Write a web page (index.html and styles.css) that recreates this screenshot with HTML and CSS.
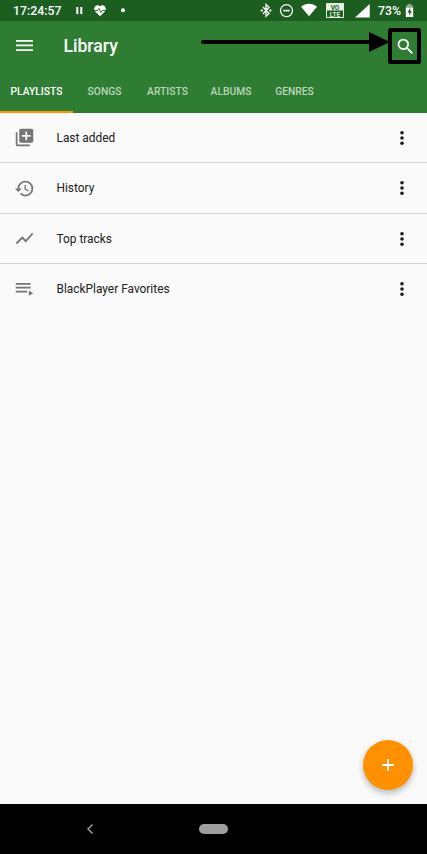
FILE: index.html
```html
<!DOCTYPE html>
<html lang="en">
<head>
<meta charset="utf-8">
<meta name="viewport" content="width=device-width">
<title>Library</title>
<link rel="stylesheet" href="styles.css">
</head>
<body>
<div class="screen">
  <header class="status">
    <span class="clock">17:24:57</span>
    <svg class="status-left" width="54" height="21" viewBox="0 0 54 21" fill="#fff">
      <path d="M1.300 7h2v7h-2zM5.300 7h2v7h-2z"/>
      <path d="M25 16.2l-4.6-4.5C16.9 8 22 2.700 25 6.500c3-3.800 8.100 1.500 4.600 5.200z"/>
      <path d="M19 10.500h3.500l1.500-2 2 4 1.300-2H31" fill="none" stroke="#1b5e20" stroke-width=".9"/>
      <circle cx="48" cy="10.300" r="2"/>
    </svg>
    <svg class="status-right" width="112" height="21" viewBox="0 0 112 21" fill="#fff">
      <path d="M3 7l6 6.500-3 2.700V4.500l3 2.700L3 14" fill="none" stroke="#fff" stroke-width="1.300"/>
      <path d="M.8 9.500h2v2h-2zM9.300 9.500h2v2h-2z"/>
      <circle cx="26.500" cy="10.600" r="6" fill="none" stroke="#fff" stroke-width="1.300"/>
      <path d="M23.300 9.800h6.400v1.600h-6.400z"/>
      <path d="M49 16.200L41 6.700c4.500-4 11.500-4 16 0z"/>
      <rect x="66.500" y="3.500" width="17" height="14" fill="none" stroke="#dcebdc"/>
      <rect x="67" y="4" width="16" height="6.500" fill="#e8f2e8"/>
      <text class="vo" x="75" y="9.700">VO</text>
      <text class="lte" x="75" y="16.700">LTE</text>
      <path d="M109.700 4v13.500H95z"/>
    </svg>
    <span class="percent">73%</span>
    <svg class="battery" width="9" height="15" viewBox="0 0 9 15">
      <path d="M2.700 1h3.600v1.500H8V6H1V2.500h1.700z" fill="#8eae90"/>
      <path d="M.8 4.800h7.400V14H.8z" fill="#fff"/>
      <path d="M5.300 4.700L2.500 9.500h1.700v3.300l2.600-4.600H5.300z" fill="#1b5e20"/>
    </svg>
  </header>
  <div class="appbar">
    <div class="toolbar">
      <svg class="menu" width="17" height="12" viewBox="0 0 17 12" fill="#fff"><path d="M0 0h17v1.700H0zM0 4.600h17v1.700H0zM0 9.200h17v1.700H0z"/></svg>
      <h1>Library</h1>
      <svg class="search" width="21" height="21" viewBox="0 0 24 24" fill="#fff"><path d="M15.500 14h-.79l-.28-.27A6.470 6.470 0 0 0 16 9.500 6.500 6.500 0 1 0 9.500 16c1.610 0 3.090-.59 4.230-1.570l.27.28v.79l5 4.990L20.490 19zm-6 0C7.010 14 5 11.990 5 9.500S7.010 5 9.500 5 14 7.010 14 9.500 11.990 14 9.500 14z"/></svg>
    </div>
    <nav class="tabs">
      <span class="tab active">PLAYLISTS</span>
      <span class="tab">SONGS</span>
      <span class="tab">ARTISTS</span>
      <span class="tab">ALBUMS</span>
      <span class="tab">GENRES</span>
    </nav>
  </div>
  <main class="list">
    <div class="row">
      <svg class="icon" viewBox="0 0 24 24"><path d="M4 6H2v14c0 1.100.9 2 2 2h14v-2H4zM20 2H8c-1.100 0-2 .9-2 2v12c0 1.100.9 2 2 2h12c1.100 0 2-.9 2-2V4c0-1.100-.9-2-2-2zm-1 9h-4v4h-2v-4H9V9h4V5h2v4h4z"/></svg>
      <span class="name">Last added</span>
      <svg class="more" viewBox="0 0 6 16"><circle cx="3" cy="2.700" r="1.800"/><circle cx="3" cy="8" r="1.800"/><circle cx="3" cy="13.300" r="1.800"/></svg>
    </div>
    <div class="row">
      <svg class="icon" viewBox="0 0 24 24"><path d="M13 3a9 9 0 0 0-9 9H1l3.890 3.890.07.14L9 12H6c0-3.870 3.130-7 7-7s7 3.130 7 7-3.130 7-7 7c-1.930 0-3.680-.79-4.940-2.060l-1.420 1.420A8.950 8.950 0 0 0 13 21a9 9 0 0 0 0-18zm-1 5v5l4.280 2.540.72-1.210-3.500-2.080V8z"/></svg>
      <span class="name">History</span>
      <svg class="more" viewBox="0 0 6 16"><circle cx="3" cy="2.700" r="1.800"/><circle cx="3" cy="8" r="1.800"/><circle cx="3" cy="13.300" r="1.800"/></svg>
    </div>
    <div class="row">
      <svg class="icon" viewBox="0 0 24 24"><path d="M3.500 18.490l6-6.010 4 4L22 6.920l-1.410-1.410-7.090 7.970-4-4L2 16.990z"/></svg>
      <span class="name">Top tracks</span>
      <svg class="more" viewBox="0 0 6 16"><circle cx="3" cy="2.700" r="1.800"/><circle cx="3" cy="8" r="1.800"/><circle cx="3" cy="13.300" r="1.800"/></svg>
    </div>
    <div class="row">
      <svg class="icon" viewBox="0 0 24 24"><path d="M2 4.500h17v2H2zM2 8.900h17v2H2zM2 13.300h13v2H2zM17 13.200l5 3-5 3z"/></svg>
      <span class="name">BlackPlayer Favorites</span>
      <svg class="more" viewBox="0 0 6 16"><circle cx="3" cy="2.700" r="1.800"/><circle cx="3" cy="8" r="1.800"/><circle cx="3" cy="13.300" r="1.800"/></svg>
    </div>
  </main>
  <footer class="navbar">
    <svg class="back" width="8" height="12" viewBox="0 0 8 12"><path d="M6.500 1.500L2 6l4.500 4.500" fill="none" stroke="#999" stroke-width="1.500"/></svg>
    <span class="home"></span>
  </footer>
  <button class="fab" aria-label="Add"><svg width="14" height="14" viewBox="0 0 14 14" fill="#fff"><path d="M6.100 1h1.800v5.100H13v1.800H7.900V13H6.100V7.900H1V6.100h5.100z"/></svg></button>
  <svg class="pointer" width="222" height="40" viewBox="0 0 222 40">
    <path d="M3 16h168" stroke="#000" stroke-width="4" stroke-linecap="round"/>
    <path d="M169 6l21 10-21 10z"/>
    <rect x="190" y="4" width="29" height="32" rx=".5" fill="none" stroke="#000" stroke-width="4" stroke-linejoin="round"/>
  </svg>
</div>
</body>
</html>
```
FILE: styles.css
```css
* { box-sizing: border-box; }
body { margin: 0; font-family: Roboto, "Liberation Sans", sans-serif; }
svg { display: block; flex: none; }
.screen {
  position: relative;
  display: flex;
  flex-direction: column;
  width: 427px;
  height: 854px;
  overflow: hidden;
  background: #fafafa;
}
.status {
  display: flex;
  align-items: center;
  height: 21px;
  padding-left: 13px;
  background: #1b5e20;
  color: #fff;
  font-size: 12.3px;
  font-weight: 500;
  white-space: nowrap;
}
.clock { width: 62px; }
.status-right { margin-left: 131px; }
.percent { width: 24px; margin-left: 6px; }
.battery { margin-left: 3px; }
.vo, .lte { font-size: 6.5px; font-weight: 700; text-anchor: middle; }
.vo { fill: #1b5e20; }
.lte { fill: #dcebdc; }
.appbar { height: 91.5px; background: #2e7d32; color: #fff; }
.toolbar { display: flex; align-items: center; height: 50px; padding: 0 11px 0 16px; }
.toolbar h1 { flex: 1; margin: 0 0 0 30.500px; font-size: 17.6px; font-weight: 500; }
.tabs { display: grid; grid-template-columns: 73px 63px 63px 64px 63px; height: 41.5px; }
.tab {
  display: flex;
  align-items: center;
  justify-content: center;
  padding-top: 2px;
  border-bottom: 2px solid transparent;
  color: #b9d6ba;
  font-size: 10.3px;
  font-weight: 500;
}
.active { color: #fff; border-color: #ff9800; }
.list { flex: 1; }
.row {
  display: flex;
  align-items: center;
  height: 50.6px;
  padding: 1px 22px 0 14px;
  border-bottom: 1px solid #d2d2d2;
}
.row:last-child { padding-top: 0; border-bottom-color: transparent; }
.icon { width: 21px; height: 21px; fill: #757575; }
.name { flex: 1; margin-left: 21.5px; color: #212121; font-size: 11.9px; }
.more { width: 6px; height: 16px; fill: #1c1c1c; }
.navbar { display: flex; align-items: center; height: 50px; padding-left: 86px; background: #000; }
.home { width: 29px; height: 10px; margin-left: 105px; border-radius: 5px; background: #9e9e9e; }
.fab {
  position: absolute;
  right: 14px;
  bottom: 64px;
  display: flex;
  align-items: center;
  justify-content: center;
  width: 50px;
  height: 50px;
  padding: 0;
  border: 0;
  border-radius: 50%;
  background: #ff9100;
  box-shadow: 0 3px 6px rgba(0, 0, 0, .28);
}
.pointer { position: absolute; left: 200px; top: 26px; }
```
